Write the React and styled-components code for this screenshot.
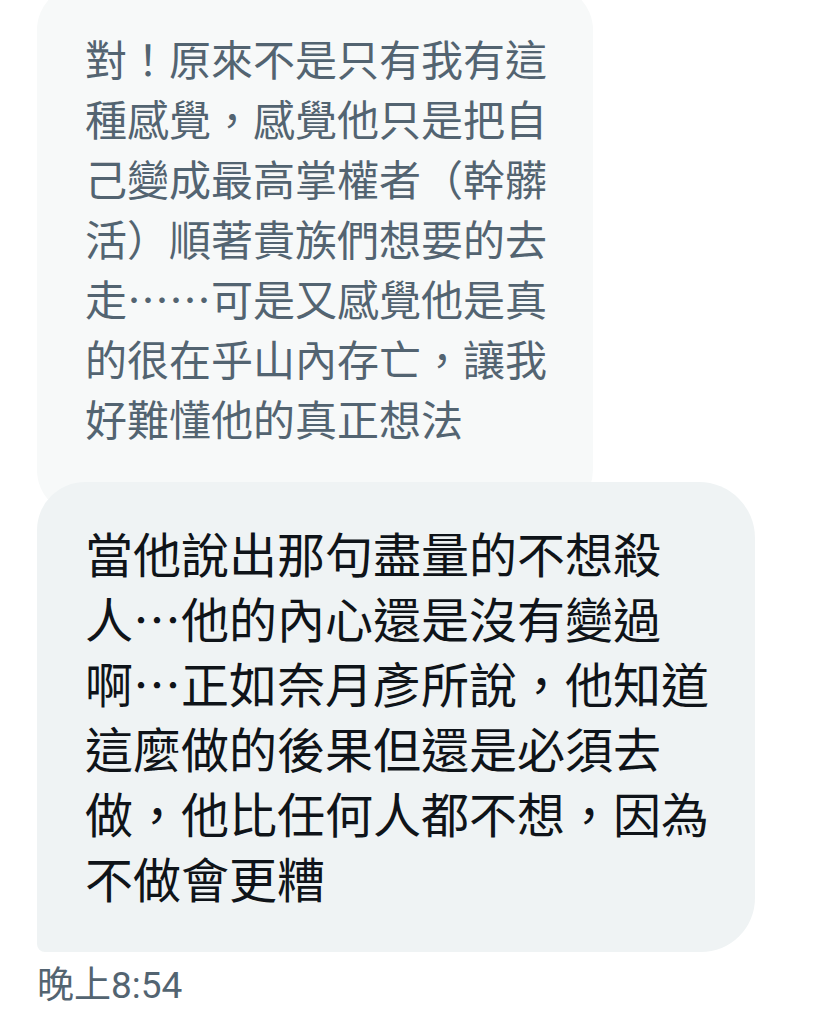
import React from "react";
import styled, { createGlobalStyle } from "styled-components";

const Global = createGlobalStyle`
  html, body { margin: 0; padding: 0; background: #ffffff; }
  body { font-family: Roboto, "Noto Sans CJK TC", sans-serif; overflow: hidden; }
`;

const Thread = styled.div`
  display: flex;
  flex-direction: column;
  align-items: flex-start;
  padding-left: 37px;
  margin-top: -15px;
`;

const QuotedBubble = styled.div`
  box-sizing: border-box;
  width: 556px;
  padding: 43px 20px 67px 48px;
  background: #f7f9f9;
  border-radius: 45px;
  color: #536471;
  font-family: "Noto Sans CJK TC", sans-serif;
  font-size: 42px;
  line-height: 60px;
  white-space: pre-line;
`;

const MessageBubble = styled.div`
  position: relative;
  box-sizing: border-box;
  width: 718px;
  margin-top: -33px;
  padding: 38px 20px 42px 48px;
  background: #eff3f4;
  border-radius: 48px 56px 54px 8px;
  color: #0f1419;
  font-family: "Noto Sans CJK TC", sans-serif;
  font-size: 48px;
  line-height: 65px;
  white-space: pre-line;
`;

const Timestamp = styled.div`
  margin-top: 12px;
  color: #536471;
  font-family: Roboto, "Noto Sans CJK TC", sans-serif;
  font-size: 37px;
  line-height: 44px;
`;

const quoted = [
  "對！原來不是只有我有這",
  "種感覺，感覺他只是把自",
  "己變成最高掌權者（幹髒",
  "活）順著貴族們想要的去",
  "走……可是又感覺他是真",
  "的很在乎山內存亡，讓我",
  "好難懂他的真正想法",
].join("\n");

const message = [
  "當他說出那句盡量的不想殺",
  "人…他的內心還是沒有變過",
  "啊…正如奈月彥所說，他知道",
  "這麼做的後果但還是必須去",
  "做，他比任何人都不想，因為",
  "不做會更糟",
].join("\n");

export default function App() {
  return (
    <>
      <Global />
      <Thread>
        <QuotedBubble>{quoted}</QuotedBubble>
        <MessageBubble>{message}</MessageBubble>
        <Timestamp>晚上8:54</Timestamp>
      </Thread>
    </>
  );
}
